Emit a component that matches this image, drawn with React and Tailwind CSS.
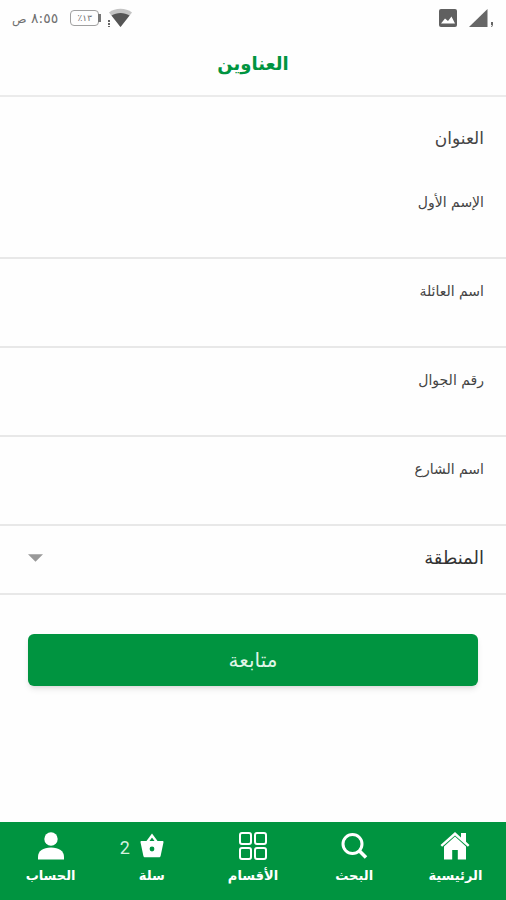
import React from "react";

const fields = [
  { id: "first-name", label: "الإسم الأول", type: "text" },
  { id: "last-name", label: "اسم العائلة", type: "text" },
  { id: "mobile", label: "رقم الجوال", type: "tel" },
  { id: "street", label: "اسم الشارع", type: "text" },
];

const HomeIcon = () => (
  <svg viewBox="0 0 30 28" className="h-7 w-[30px]" fill="currentColor">
    <path d="M15 0 0.5 13l1.6 1.8L15 3.4l12.9 11.4 1.6-1.8L26 9.8V1h-5v4.4z" />
    <path d="M15 4.6 4 14.4v13.1h8.2V18h5.6v9.5H26V14.4z" />
  </svg>
);

const SearchIcon = () => (
  <svg viewBox="0 0 28 28" className="size-7" fill="none" stroke="currentColor">
    <circle cx="12.5" cy="12" r="9.5" strokeWidth="3" />
    <path d="m19 18.5 7 7" strokeWidth="3.6" />
  </svg>
);

const GridIcon = () => (
  <svg
    viewBox="0 0 28 28"
    className="size-7"
    fill="none"
    stroke="currentColor"
    strokeWidth="2"
  >
    <rect x="1" y="1" width="11" height="11" rx="2" />
    <rect x="16" y="1" width="11" height="11" rx="2" />
    <rect x="1" y="16" width="11" height="11" rx="2" />
    <rect x="16" y="16" width="11" height="11" rx="2" />
  </svg>
);

const BasketIcon = () => (
  <svg viewBox="0 0 24 28" className="h-7 w-6" fill="none">
    <path d="M6.5 11 12 3.5l5.5 7.5" stroke="currentColor" strokeWidth="2.4" />
    <path
      d="M1.5 9h21c.8 0 1.2.6 1 1.3L20.600 24c-.2.8-.8 1.300-1.600 1.300H5c-.8 0-1.400-.5-1.600-1.300L.5 10.300C.3 9.600.7 9 1.500 9Z"
      fill="currentColor"
    />
    <circle cx="12" cy="17" r="2.4" fill="#009440" />
  </svg>
);

const UserIcon = () => (
  <svg viewBox="0 0 28 28" className="size-7" fill="currentColor">
    <circle cx="14" cy="7" r="6.7" />
    <path d="M1 27.5v-2.5c0-6 5-9.5 13-9.5s13 3.5 13 9.5v2.5z" />
  </svg>
);

const tabs = [
  { label: "الرئيسية", Icon: HomeIcon },
  { label: "البحث", Icon: SearchIcon },
  { label: "الأقسام", Icon: GridIcon },
  { label: "سلة", Icon: BasketIcon, count: 2 },
  { label: "الحساب", Icon: UserIcon },
];

const StatusBar = () => (
  <div
    dir="ltr"
    className="h-9 px-3 flex items-center justify-between text-[#707070]"
  >
    <div className="flex items-center gap-2">
      <span dir="rtl" className="text-sm">
        ٨:٥٥ <span className="text-xs">ص</span>
      </span>
      <span className="relative ml-1 h-4 w-[29px] border border-[#a0a0a0] rounded-sm grid place-items-center text-[9px] leading-none">
        ٪١٣
        <span className="absolute -right-[3px] top-[3px] h-2 w-[3px] bg-[#777]" />
      </span>
      <svg viewBox="0 0 26 20" className="h-5 w-[26px]">
        <path d="M2 4.5C8-.5 19-.5 25 4.5L13.5 19z" fill="#c4c4c4" />
        <path d="M4.5 7.5c5-3.5 13-3.5 18 0L13.5 19z" fill="#555" />
        <path d="M2 12v7" stroke="#666" strokeWidth="2" strokeDasharray="2 1" />
      </svg>
    </div>
    <div className="flex items-center gap-3">
      <svg viewBox="0 0 18 20" className="h-5 w-[18px]">
        <rect y="1" width="18" height="18" rx="2" fill="#606060" />
        <path d="M2 15.5 6 10.500l3 2.500 3.500-4.500 3.500 7z" fill="#fff" />
      </svg>
      <svg viewBox="0 0 25 20" className="h-5 w-[25px]" fill="#666">
        <path d="M0 19 18.5 1v18z" />
        <path d="M22 14h2v3l-1 2h-1l1-2h-1z" />
      </svg>
    </div>
  </div>
);

export default function App() {
  return (
    <div
      dir="rtl"
      lang="ar"
      className="min-h-screen flex flex-col bg-[#fefefe] text-[#444] font-['DejaVu_Sans',sans-serif]"
    >
      <StatusBar />
      <header className="h-[61px] pb-1 border-b-2 border-[#ebebeb] grid place-items-center">
        <h1 className="text-lg font-bold text-[#009440]">العناوين</h1>
      </header>

      <form className="grow" onSubmit={(e) => e.preventDefault()}>
        <h2 className="px-[22px] pt-[29px] pb-5 text-[17px] leading-6">
          العنوان
        </h2>

        {fields.map(({ id, label, type }) => (
          <div key={id} className="px-[22px] pt-5 border-b-2 border-[#e8e8e8]">
            <label htmlFor={id} className="block text-sm leading-6">
              {label}
            </label>
            <input
              id={id}
              name={id}
              type={type}
              className="block h-[43px] w-full bg-transparent outline-none"
            />
          </div>
        ))}

        <div className="relative border-b-2 border-[#e8e8e8]">
          <select
            aria-label="المنطقة"
            className="block h-[67px] w-full px-[22px] pb-1 appearance-none bg-transparent text-lg text-[#333] outline-none"
          >
            <option>المنطقة</option>
          </select>
          <svg
            viewBox="0 0 14 7"
            className="pointer-events-none absolute left-7 top-7 h-2 w-[15px]"
            fill="#999"
          >
            <path d="M0 0h14L7 7z" />
          </svg>
        </div>

        <div className="px-7 py-[39px]">
          <button
            type="submit"
            className="h-[52px] w-full rounded-md bg-[#009440] text-xl text-[#dff5e7] shadow-md"
          >
            متابعة
          </button>
        </div>
      </form>

      <nav className="h-[78px] grid grid-cols-5 bg-[#009440] text-white">
        {tabs.map(({ label, Icon, count }) => (
          <a
            key={label}
            href="#"
            className="pt-[10px] flex flex-col items-center gap-1"
          >
            <span className="relative">
              <Icon />
              {count && (
                <span className="absolute right-full top-1 mr-[10px] font-[Roboto,sans-serif] text-lg leading-6 text-[#d5f0df]">
                  {count}
                </span>
              )}
            </span>
            <span className="text-[13px] leading-6 font-bold">{label}</span>
          </a>
        ))}
      </nav>
    </div>
  );
}
